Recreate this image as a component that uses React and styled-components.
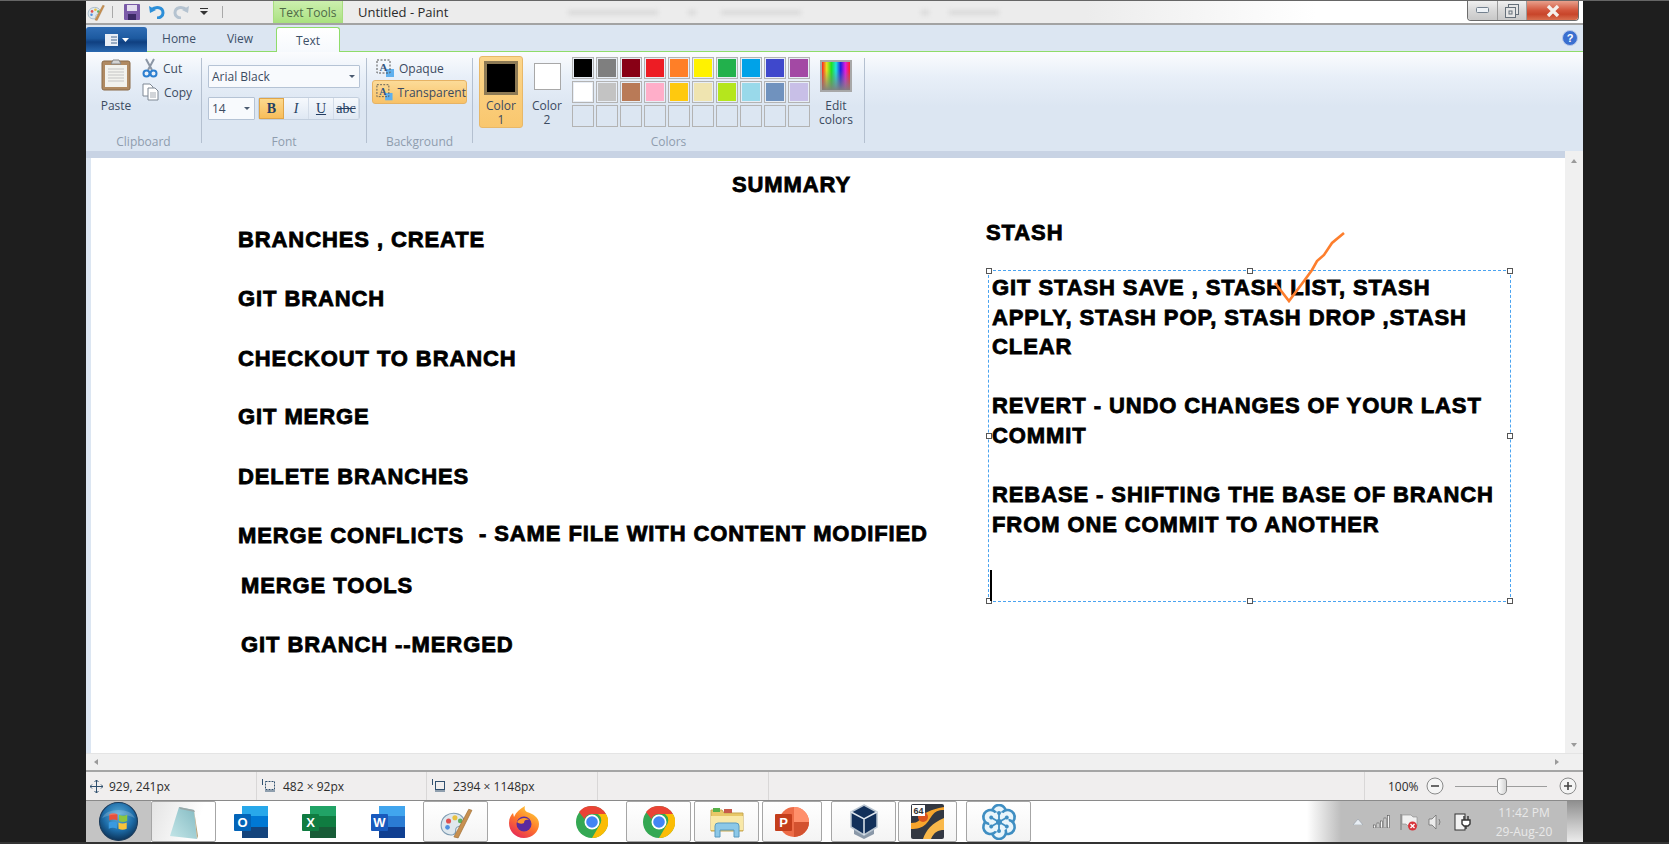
import styled, { createGlobalStyle } from 'styled-components';

const GlobalStyle = createGlobalStyle`
  html, body {
    margin: 0;
    padding: 0;
    background: #1e1e1e;
    overflow: hidden;
  }
  * { box-sizing: border-box; }
`;

const Page = styled.div`
  width: 1669px;
  height: 844px;
  background: #1e1e1e;
  border-top: 1px solid #666;
  border-bottom: 2px solid #333;
  padding-left: 86px;
  font-family: 'Open Sans', 'Noto Sans', sans-serif;
  font-size: 12px;
  color: #3b4a60;
  overflow: hidden;
`;
const Win = styled.div`
  width: 1497px;
  height: 841px;
  display: flex;
  flex-direction: column;
  background: #f0eeee;
`;

/* title bar */
const TitleBar = styled.div`
  height: 24px;
  flex: none;
  display: flex;
  align-items: center;
  background: linear-gradient(90deg, #ececec 1000px, #fff 1230px);
  border-bottom: 2px solid #a3a3a3;
  overflow: hidden;
`;
const Qat = styled.div`
  display: flex;
  align-items: center;
  width: 187px;
  height: 100%;
`;
const QatSlot = styled.div`
  width: ${(p) => p.$w}px;
  display: flex;
  justify-content: center;
  align-items: center;
`;
const QatSep = styled.div`
  width: 1px;
  height: 12px;
  background: #a9a9a9;
`;
const ContextTab = styled.div`
  width: 70px;
  height: 24px;
  flex: none;
  display: flex;
  align-items: center;
  justify-content: center;
  background: linear-gradient(#cdf0b0, #b4e58e 70%, #a6e07a);
  border-left: 1px solid #a8dd80;
  border-right: 1px solid #a8dd80;
  color: #4e6a46;
  font-size: 12px;
`;
const WinTitle = styled.div`
  margin-left: 15px;
  font-size: 13px;
  color: #2a2a2a;
`;
const GhostText = styled.div`
  width: ${(p) => p.$w}px;
  margin-left: ${(p) => p.$m}px;
  height: 5px;
  background: #dadada;
  filter: blur(2px);
`;
const Spacer = styled.div`
  flex: 1;
`;
const WinButtons = styled.div`
  display: flex;
  align-self: flex-start;
  height: 20px;
  margin-right: 4px;
  border: 1px solid #6c6c6c;
  border-top: none;
  border-radius: 0 0 4px 4px;
  overflow: hidden;
`;
const WinButton = styled.div`
  width: ${(p) => p.$w}px;
  display: flex;
  align-items: center;
  justify-content: center;
  background: ${(p) =>
    p.$close
      ? 'linear-gradient(#e8a08c, #d2543a 50%, #c8452a 70%, #d87050)'
      : 'linear-gradient(#f0f0f0, #d8d8d8 50%, #c8c8c8)'};
  border-right: ${(p) => (p.$close ? 'none' : '1px solid #9c9c9c')};
`;

/* tabs */
const TabRow = styled.div`
  height: 27px;
  flex: none;
  display: flex;
  align-items: flex-end;
  background: #dce6f2;
  border-bottom: 1px solid #8fdc6a;
`;
const AppMenu = styled.div`
  width: 61px;
  height: 25px;
  display: flex;
  align-items: center;
  justify-content: center;
  gap: 4px;
  margin-bottom: -1px;
  background: linear-gradient(#2f6db5, #1d5aa0 45%, #0f3f80 60%, #2a69b0);
  border-radius: 3px 3px 0 0;
`;
const Tab = styled.div`
  width: ${(p) => p.$w}px;
  height: 25px;
  display: flex;
  align-items: center;
  justify-content: center;
  font-size: 12px;
  color: #3d5068;
`;
const ActiveTab = styled(Tab)`
  height: 25px;
  margin-bottom: -1px;
  margin-left: 7px;
  background: linear-gradient(#fff, #f6f9fd);
  border: 1px solid #8fdc6a;
  border-bottom: none;
  border-radius: 3px 3px 0 0;
`;
const HelpBtn = styled.div`
  margin-left: auto;
  margin-right: 5px;
  align-self: center;
  display: flex;
`;

/* ribbon */
const Ribbon = styled.div`
  height: 99px;
  flex: none;
  display: flex;
  padding-top: 6px;
  background: linear-gradient(#fbfcfe, #e8eff8 25%, #dce6f2 55%);
`;
const Group = styled.div`
  width: ${(p) => p.$w}px;
  height: 92px;
  display: flex;
  flex-direction: column;
`;
const GroupBody = styled.div`
  height: 76px;
  display: flex;
  padding-left: ${(p) => p.$pl || 0}px;
`;
const GroupLabel = styled.div`
  height: 16px;
  line-height: 16px;
  text-align: center;
  font-size: 12px;
  color: #8f9dae;
`;
const RibbonSep = styled.div`
  width: 1px;
  height: 85px;
  background: #b4c0d0;
`;
const PasteBtn = styled.div`
  width: 46px;
  margin-left: 7px;
  display: flex;
  flex-direction: column;
  align-items: center;
  gap: 6px;
`;
const SmallCol = styled.div`
  display: flex;
  flex-direction: column;
  gap: 4px;
  margin-left: 3px;
`;
const SmallBtn = styled.div`
  height: 20px;
  display: flex;
  align-items: center;
  gap: 5px;
  font-size: 12px;
`;
const FontCol = styled.div`
  display: flex;
  flex-direction: column;
  gap: 9px;
  padding-top: 7px;
`;
const Combo = styled.div`
  width: ${(p) => p.$w}px;
  height: 23px;
  display: flex;
  align-items: center;
  justify-content: space-between;
  padding: 0 4px 0 3px;
  background: #f8fafd;
  border: 1px solid #b5c3d5;
  border-radius: 1px;
  font-size: 12px;
`;
const Caret = styled.span`
  width: 0;
  height: 0;
  border-left: 3px solid transparent;
  border-right: 3px solid transparent;
  border-top: 3px solid #4a5a70;
`;
const FontRow = styled.div`
  display: flex;
  gap: 3px;
`;
const StyleBtns = styled.div`
  display: flex;
  height: 23px;
  border: 1px solid #c3cfde;
  border-radius: 3px;
  background: linear-gradient(#f6f9fd, #dfe8f3);
`;
const StyleBtn = styled.div`
  width: 25px;
  display: flex;
  align-items: center;
  justify-content: center;
  font-family: 'Liberation Serif', serif;
  font-size: 14px;
  color: #243e62;
  background: ${(p) => (p.$on ? 'linear-gradient(#fcd98e, #f8bd5a)' : 'transparent')};
  border: ${(p) => (p.$on ? '1px solid #e0a548' : 'none')};
  border-right: 1px solid ${(p) => (p.$on ? '#e0a548' : '#d3dce8')};
`;
const BgCol = styled.div`
  display: flex;
  flex-direction: column;
  gap: 2px;
  padding: 0 0 0 5px;
`;
const BgBtn = styled.div`
  width: 95px;
  height: ${(p) => (p.$on ? 24 : 20)}px;
  display: flex;
  align-items: center;
  gap: 4px;
  padding-left: 3px;
  font-size: 12px;
  background: ${(p) => (p.$on ? 'linear-gradient(#fcdb98, #f8c268)' : 'transparent')};
  border: 1px solid ${(p) => (p.$on ? '#e6b365' : 'transparent')};
  border-radius: 3px;
`;
const ColorCols = styled.div`
  display: flex;
  padding-left: 6px;
`;
const ColorPick = styled.div`
  width: ${(p) => (p.$on ? 44 : 36)}px;
  height: 72px;
  margin: -2px 6px 0 0;
  display: flex;
  flex-direction: column;
  align-items: center;
  background: ${(p) => (p.$on ? 'linear-gradient(#fcd68c, #f9c76e)' : 'transparent')};
  border: ${(p) => (p.$on ? '1px solid #e8b868' : 'none')};
  border-radius: 3px;
`;
const BigSwatch = styled.div`
  width: ${(p) => p.$s}px;
  height: ${(p) => p.$s}px;
  margin-top: ${(p) => p.$mt}px;
  background: ${(p) => p.$c};
  border: ${(p) => (p.$on ? '3px' : '1px')} solid ${(p) => (p.$on ? '#8d7a55' : '#a8a8a8')};
  box-shadow: ${(p) => (p.$on ? 'none' : 'inset 0 0 0 1px #fff')};
`;
const SwatchLabel = styled.div`
  margin-top: ${(p) => p.$mt}px;
  font-size: 12px;
  line-height: 14px;
  text-align: center;
`;
const Palette = styled.div`
  display: grid;
  grid-template-columns: repeat(10, 22px);
  grid-auto-rows: 22px;
  gap: 2px;
  margin: -1px 0 0 1px;
`;
const Cell = styled.div`
  background: ${(p) => p.$c || 'transparent'};
  border: 1px solid #b3b3b3;
  box-shadow: ${(p) => (p.$c ? 'inset 0 0 0 1px #e8eef6' : 'none')};
`;
const EditColors = styled.div`
  width: 46px;
  margin-left: 3px;
  display: flex;
  flex-direction: column;
  align-items: center;
`;
const Rainbow = styled.div`
  width: 32px;
  height: 32px;
  margin-top: 2px;
  border: 2px solid #a8a8a8;
  background: linear-gradient(transparent 30%, rgba(128, 128, 128, 0.95)),
    linear-gradient(90deg, #ff2020, #e8e020, #20e020, #20e0e0, #2020e0, #e020e0, #ff2020);
`;

/* canvas */
const RibbonFoot = styled.div`
  height: 7px;
  flex: none;
  margin-right: 18px;
  background: #c8d3e4;
`;
const Workspace = styled.div`
  height: 595px;
  flex: none;
  display: flex;
`;
const LeftGutter = styled.div`
  width: 5px;
  background: #dce6f2;
`;
const Canvas = styled.div`
  position: relative;
  flex: 1;
  background: #fff;
  color: #000;
  overflow: hidden;
`;
const VScroll = styled.div`
  width: 18px;
  margin-top: -7px;
  display: flex;
  flex-direction: column;
  align-items: center;
  justify-content: space-between;
  padding: 8px 0 6px;
  background: #f0f0f0;
`;
const HScroll = styled.div`
  height: 17px;
  flex: none;
  display: flex;
  align-items: center;
  justify-content: space-between;
  padding: 0 24px 0 8px;
  background: #f0f0f0;
  border-top: 1px solid #e4e4e4;
`;
const Arrow = styled.span`
  width: 0;
  height: 0;
  border: 3px solid transparent;
  ${(p) => p.$dir === 'left' && 'border-right: 4px solid #9a9a9a; border-left: none;'}
  ${(p) => p.$dir === 'right' && 'border-left: 4px solid #9a9a9a; border-right: none;'}
  ${(p) => p.$dir === 'up' && 'border-bottom: 4px solid #9a9a9a; border-top: none;'}
  ${(p) => p.$dir === 'down' && 'border-top: 4px solid #9a9a9a; border-bottom: none;'}
`;
const PaintText = styled.div`
  position: absolute;
  left: ${(p) => p.$x - 91}px;
  top: ${(p) => p.$y - 158}px;
  height: 30px;
  line-height: 30px;
  white-space: nowrap;
  font-family: 'Liberation Sans', Arial, sans-serif;
  font-weight: 700;
  font-size: 22px;
  letter-spacing: 0.9px;
  -webkit-text-stroke: 0.8px #000;
`;
const TextBox = styled.div`
  position: absolute;
  left: ${988 - 91}px;
  top: ${270 - 158}px;
  width: 523px;
  height: 332px;
  padding: 2px 3px;
  border: 1px dashed #4aa3f0;
  font-family: 'Liberation Sans', Arial, sans-serif;
  font-weight: 700;
  font-size: 22px;
  letter-spacing: 0.9px;
  line-height: 29.6px;
  -webkit-text-stroke: 0.8px #000;
`;
const BoxLine = styled.div`
  height: 29.6px;
  white-space: nowrap;
`;
const Handle = styled.span`
  position: absolute;
  left: ${(p) => p.$l}%;
  top: ${(p) => p.$t}%;
  width: 6px;
  height: 6px;
  margin: -3px 0 0 -3px;
  background: #fff;
  border: 1px solid #555;
`;
const Cursor = styled.span`
  position: absolute;
  left: 1px;
  top: 299px;
  width: 2px;
  height: 31px;
  background: #000;
`;
const TickMark = styled.svg`
  position: absolute;
  left: ${1270 - 91}px;
  top: ${228 - 158}px;
`;

/* status bar */
const StatusBar = styled.div`
  height: 30px;
  flex: none;
  display: flex;
  background: #f0eeee;
  border-top: 2px solid #a5a5a5;
  font-size: 12px;
  color: #2c2c2c;
`;
const StatusCell = styled.div`
  width: ${(p) => p.$w}px;
  display: flex;
  align-items: center;
  gap: 6px;
  padding-left: 4px;
  border-right: 1px solid #d9d7d7;
`;
const ZoomCell = styled.div`
  flex: 1;
  display: flex;
  align-items: center;
  gap: 7px;
  padding-left: 23px;
`;
const ZoomTrack = styled.div`
  position: relative;
  width: 92px;
  height: 1px;
  margin: 0 5px 0 4px;
  background: #9d9d9d;
`;
const ZoomThumb = styled.div`
  position: absolute;
  left: 42px;
  top: -8px;
  width: 10px;
  height: 17px;
  border: 1px solid #8d8d8d;
  border-radius: 3px 3px 5px 5px;
  background: linear-gradient(90deg, #fff, #d4d4d4);
`;

/* taskbar */
const Taskbar = styled.div`
  height: 42px;
  flex: none;
  display: flex;
  align-items: stretch;
  background: linear-gradient(90deg, #fff 1221px, #bdbdbd 1255px);
  border-top: 1px solid #8a8a8a;
`;
const StartArea = styled.div`
  width: 65px;
  flex: none;
  display: flex;
  align-items: center;
  justify-content: center;
  background: #c4c4c4;
`;
const TaskBtn = styled.div`
  width: ${(p) => p.$w}px;
  flex: none;
  margin-left: ${(p) => p.$m || 0}px;
  display: flex;
  align-items: center;
  justify-content: center;
  border: 1px solid ${(p) => (p.$open ? '#a6a6a6' : 'transparent')};
  border-radius: 2px;
  background: ${(p) => (p.$open ? 'linear-gradient(#fff, #f4f4f4)' : 'transparent')};
`;
const NotepadBtn = styled(TaskBtn)`
  background: linear-gradient(110deg, #e4e4e4, #fff 70%);
`;
const Tray = styled.div`
  margin-left: auto;
  display: flex;
  align-items: center;
  gap: 10px;
  padding-right: 12px;
`;
const Clock = styled.div`
  width: 62px;
  margin-left: 12px;
  text-align: center;
  font-size: 12px;
  line-height: 19px;
  white-space: nowrap;
  color: #e9e9e9;
`;
const ShowDesktop = styled.div`
  width: 16px;
  flex: none;
  background: linear-gradient(#8f8f8f, #c8c8c8 60%, #ececec);
`;

const topColors = ['#000000', '#7f7f7f', '#880015', '#ed1c24', '#ff7f27', '#fff200', '#22b14c', '#00a2e8', '#3f48cc', '#a349a4'];
const midColors = ['#ffffff', '#c3c3c3', '#b97a57', '#ffaec9', '#ffc90e', '#efe4b0', '#b5e61d', '#99d9ea', '#7092be', '#c8bfe7'];
const blanks = Array(10).fill(null);

const leftNotes = [
  { x: 238, y: 225, t: 'BRANCHES , CREATE' },
  { x: 238, y: 284, t: 'GIT BRANCH' },
  { x: 238, y: 344, t: 'CHECKOUT TO BRANCH' },
  { x: 238, y: 402, t: 'GIT MERGE' },
  { x: 238, y: 462, t: 'DELETE BRANCHES' },
  { x: 238, y: 521, t: 'MERGE CONFLICTS' },
  { x: 479, y: 519, t: '- SAME FILE WITH CONTENT MODIFIED' },
  { x: 241, y: 571, t: 'MERGE TOOLS' },
  { x: 241, y: 630, t: 'GIT BRANCH --MERGED' },
  { x: 732, y: 170, t: 'SUMMARY' },
  { x: 986, y: 218, t: 'STASH' },
];
const boxLines = [
  'GIT STASH SAVE , STASH LIST, STASH',
  'APPLY, STASH POP, STASH DROP ,STASH',
  'CLEAR',
  '',
  'REVERT - UNDO CHANGES OF YOUR LAST',
  'COMMIT',
  '',
  'REBASE - SHIFTING THE BASE OF BRANCH',
  'FROM ONE COMMIT TO ANOTHER',
];
const handles = [
  [0, 0], [50, 0], [100, 0], [0, 50], [100, 50], [0, 100], [50, 100], [100, 100],
];
const snowAngles = [0, 60, 120, 180, 240, 300];

const PaletteIcon = ({ s = 20 }) => (
  <svg width={s} height={s} viewBox="0 0 32 32">
    <path d="M2 19C2 11 9 7 16 8c6 1 9 6 7 10-2 3-6 1-7 4s1 5-3 6C7 29 2 25 2 19z" fill="#dfe8ee" stroke="#7f9cb2" />
    <circle cx="9" cy="15" r="2.4" fill="#e05050" />
    <circle cx="15" cy="12" r="2.4" fill="#e8c040" />
    <circle cx="20" cy="15" r="2.2" fill="#60b060" />
    <circle cx="8" cy="21" r="2.2" fill="#5090e0" />
    <path d="M14 30L28 4l3 1-13 26z" fill="#c89050" stroke="#9a6a30" strokeWidth="0.6" />
  </svg>
);
const Scissors = () => (
  <svg width="16" height="20" viewBox="0 0 16 20" fill="none">
    <path d="M4 1l6 11M12 1L6 12" stroke="#8b96a5" strokeWidth="2" />
    <circle cx="4.5" cy="15.5" r="3" stroke="#2d7fd0" strokeWidth="2" />
    <circle cx="11.5" cy="15.5" r="3" stroke="#2d7fd0" strokeWidth="2" />
  </svg>
);
const CopyIcon = () => (
  <svg width="17" height="18" viewBox="0 0 17 18" fill="#fff" stroke="#7e8894">
    <path d="M1 1h7l3 3v9H1z" />
    <path d="M6 5h7l3 3v9H6z" />
    <path d="M8 10h6M8 12h6M8 14h6" strokeWidth="0.7" />
  </svg>
);
const Clipboard = () => (
  <svg width="30" height="33" viewBox="0 0 30 33">
    <rect x="1" y="3" width="28" height="29" rx="2" fill="#b08a62" stroke="#8a6a48" />
    <rect x="4" y="7" width="22" height="22" fill="#f2f2ee" />
    <path d="M7 11h16M7 14h16M7 17h16M7 20h16M7 23h16" stroke="#c4c4c4" />
    <path d="M10 6l2-4h6l2 4z" fill="#d4d4d4" stroke="#888" />
  </svg>
);
const TextModeIcon = () => (
  <svg width="19" height="19" viewBox="0 0 19 19">
    <rect x="10" y="10" width="8" height="8" fill="#5fb0ee" />
    <rect x="1" y="1" width="13" height="13" fill="none" stroke="#555" strokeDasharray="2 1.5" />
    <text x="3.5" y="12" fontFamily="Liberation Serif" fontSize="11" fontWeight="700" fill="#33557f">A</text>
  </svg>
);
const StartOrb = () => (
  <svg width="39" height="39" viewBox="0 0 38 38">
    <defs>
      <radialGradient id="orb" cx="50%" cy="35%" r="65%">
        <stop offset="0" stopColor="#5fb2dc" />
        <stop offset="0.6" stopColor="#1d6ca8" />
        <stop offset="1" stopColor="#0c3358" />
      </radialGradient>
    </defs>
    <circle cx="19" cy="19" r="18.5" fill="url(#orb)" stroke="#1a3a5a" />
    <path d="M10 12q4-2 8 0v6q-4-2-8 0z" fill="#e8503a" />
    <path d="M19.5 12.5q4 2 8 0v6q-4 2-8 0z" fill="#8cc63f" />
    <path d="M9.5 20q4-2 8 0v6q-4-2-8 0z" fill="#3a9ae0" />
    <path d="M19 20q4 2 8 0v6q-4 2-8 0z" fill="#f8c33a" />
    <path d="M3 16C6 5 32 5 35 16 28 11 10 11 3 16z" fill="#fff" opacity="0.18" />
  </svg>
);
const Notepad = () => (
  <svg width="36" height="36" viewBox="0 0 36 36">
    <defs>
      <linearGradient id="pad" x1="0" y1="1" x2="1" y2="0">
        <stop offset="0" stopColor="#c4e6e8" />
        <stop offset="1" stopColor="#83bac2" />
      </linearGradient>
    </defs>
    <path d="M13 3l15 3 3 29-27-3z" fill="url(#pad)" />
    <path d="M13 3l15 3 1 2-15-3z" fill="#9aa8a8" />
    <path d="M28 6l4 26-1 3z" fill="#b5a27a" />
  </svg>
);
const Office = ({ back, dark, mid, letter, tile, round }) => (
  <svg width="34" height="32" viewBox="0 0 34 32">
    {round ? (
      <>
        <circle cx="19" cy="16" r="15" fill={mid} />
        <path d="M19 1a15 15 0 0 1 15 15H19z" fill={back} />
        <path d="M34 16a15 15 0 0 1-15 15V16z" fill={dark} />
      </>
    ) : (
      <>
        <rect x="8" y="0" width="26" height="32" rx="2" fill={mid} />
        <rect x="8" y="0" width="26" height="10" fill={back} />
        <rect x="8" y="21" width="26" height="11" fill={dark} />
      </>
    )}
    <rect x="0" y="8" width="17" height="17" rx="1" fill={tile} />
    <text x="8.5" y="21" textAnchor="middle" fontFamily="Liberation Sans" fontWeight="700" fontSize="13" fill="#fff">{letter}</text>
  </svg>
);
const Firefox = () => (
  <svg width="32" height="34" viewBox="0 0 32 34">
    <defs>
      <linearGradient id="ff" x1="0.8" y1="0" x2="0.2" y2="1">
        <stop offset="0" stopColor="#ffd43a" />
        <stop offset="0.5" stopColor="#ff7a2a" />
        <stop offset="1" stopColor="#e5245a" />
      </linearGradient>
    </defs>
    <path d="M16 33C7 33 1 26 1 18 1 13 3 10 5 8l1 4c2-5 6-8 11-11-1 3 0 5 2 6 6 2 12 5 12 12 0 8-7 14-15 14z" fill="url(#ff)" />
    <circle cx="16" cy="19" r="7.5" fill="#5b2a9e" />
    <path d="M9 17c3-5 10-5 12-2-3-1-5 0-5 3-2 1-5 1-7-1z" fill="#ff9a2a" />
  </svg>
);
const Chrome = () => (
  <svg width="32" height="32" viewBox="0 0 32 32">
    <circle cx="16" cy="16" r="16" fill="#34a853" />
    <path d="M16 0a16 16 0 0 1 13.9 8H16a8 8 0 0 0-7.5 5L3 6A16 16 0 0 1 16 0z" fill="#ea4335" />
    <path d="M30 8a16 16 0 0 1-14 24l7-12a8 8 0 0 0-1-12z" fill="#fbbc05" />
    <circle cx="16" cy="16" r="7.5" fill="#fff" />
    <circle cx="16" cy="16" r="5.8" fill="#4285f4" />
  </svg>
);
const Explorer = () => (
  <svg width="34" height="34" viewBox="0 0 34 34">
    <path d="M1 5h11l2 3h19v18H1z" fill="#e8c868" stroke="#c8a850" />
    <rect x="3" y="3" width="7" height="4" fill="#56b04a" />
    <rect x="14" y="4" width="8" height="4" fill="#c85a4a" />
    <path d="M1 11h32v14H1z" fill="#f8e8a8" />
    <path d="M5 32V21q0-3 3-3h18q3 0 3 3v11h-5v-7H10v7z" fill="#8cc8e8" stroke="#5a9ac0" />
  </svg>
);
const VBox = () => (
  <svg width="30" height="36" viewBox="0 0 30 36">
    <path d="M5 24l10 6 10-6v6l-10 5-10-5z" fill="#8a98a8" />
    <path d="M15 1l13 7v15l-13 8L2 23V8z" fill="#12305a" stroke="#b8c4d0" strokeWidth="1.5" />
    <path d="M2 8l13 7 13-7M15 15v16" stroke="#dfe6ee" strokeWidth="1.5" fill="none" />
  </svg>
);
const Orange = () => (
  <svg width="33" height="35" viewBox="0 0 33 35">
    <rect width="33" height="35" rx="2" fill="#333842" />
    <path d="M33 6c-12 0-12 8-18 14-4 4-9 5-15 5v-6c8 0 8-3 12-8 2-2 6-5 21-8z" fill="#f7a52c" />
    <path d="M33 14v12c-6 0-10 2-13 9h-8c3-9 9-16 21-21z" fill="#f9b84a" />
    <circle cx="12" cy="13" r="5" fill="#d9531e" />
    <rect x="1" y="1" width="13" height="11" fill="#fff" />
    <text x="7.5" y="10" textAnchor="middle" fontFamily="Liberation Sans" fontWeight="700" fontSize="9" fill="#333">64</text>
  </svg>
);
const Snow = () => (
  <svg width="36" height="36" viewBox="0 0 36 36" fill="none">
    {snowAngles.map((a) => (
      <circle key={a} cx="18" cy="8" r="7" fill="#e9f5fb" stroke="#3f8ec2" strokeWidth="2.6" transform={`rotate(${a} 18 18)`} />
    ))}
    <circle cx="18" cy="18" r="10" fill="#e9f5fb" />
    {snowAngles.map((a) => (
      <g key={a} transform={`rotate(${a} 18 18)`}>
        <path d="M18 18V9" stroke="#3f8ec2" strokeWidth="1.8" />
        <circle cx="18" cy="9" r="2" fill="#3f8ec2" />
      </g>
    ))}
    <circle cx="18" cy="18" r="3" fill="#3f8ec2" />
  </svg>
);
const CircleBtn = ({ plus }) => (
  <svg width="18" height="18" viewBox="0 0 18 18" fill="none">
    <circle cx="9" cy="9" r="8" fill="#f4f4f4" stroke="#8a8a8a" />
    <path d={plus ? 'M5 9h8M9 5v8' : 'M5 9h8'} stroke="#444" strokeWidth="1.6" />
  </svg>
);

export default function App() {
  return (
    <Page>
      <GlobalStyle />
      <Win>
        <TitleBar>
          <Qat>
            <QatSlot $w={20}><PaletteIcon s={18} /></QatSlot>
            <QatSlot $w={12}><QatSep /></QatSlot>
            <QatSlot $w={28}>
              <svg width="16" height="16" viewBox="0 0 16 16">
                <rect width="16" height="16" rx="1" fill="#7a5aa8" />
                <rect x="3" y="1" width="10" height="6" fill="#e4deef" />
                <rect x="4" y="10" width="8" height="6" fill="#3c2a66" />
              </svg>
            </QatSlot>
            <QatSlot $w={22}>
              <svg width="16" height="14" viewBox="0 0 16 14" fill="none">
                <path d="M2 5c5-4 12-3 12 3 0 3-3 5-6 5" stroke="#2d8fd8" strokeWidth="3" />
                <path d="M0 1l1 7 6-3z" fill="#2d8fd8" />
              </svg>
            </QatSlot>
            <QatSlot $w={26}>
              <svg width="16" height="14" viewBox="0 0 16 14" fill="none">
                <path d="M14 5C9 1 2 2 2 8c0 3 3 5 6 5" stroke="#b5c3d0" strokeWidth="3" />
                <path d="M16 1l-1 7-6-3z" fill="#b5c3d0" />
              </svg>
            </QatSlot>
            <QatSlot $w={20}>
              <svg width="8" height="8" viewBox="0 0 8 8"><path d="M0 0h8v1H0zM0 3h8L4 7z" fill="#333" /></svg>
            </QatSlot>
            <QatSlot $w={16}><QatSep /></QatSlot>
          </Qat>
          <ContextTab>Text Tools</ContextTab>
          <WinTitle>Untitled - Paint</WinTitle>
          <GhostText $w={90} $m={120} />
          <GhostText $w={8} $m={30} />
          <GhostText $w={80} $m={25} />
          <GhostText $w={8} $m={120} />
          <GhostText $w={50} $m={20} />
          <Spacer />
          <WinButtons>
            <WinButton $w={30}>
              <svg width="13" height="7" viewBox="0 0 13 7"><rect x="0.5" y="0.5" width="12" height="5" rx="1" fill="#eef2f6" stroke="#73808e" /></svg>
            </WinButton>
            <WinButton $w={29}>
              <svg width="14" height="14" viewBox="0 0 14 14" fill="#e6e6e6" stroke="#66707a">
                <rect x="3.5" y="0.5" width="10" height="10" />
                <rect x="0.5" y="3.5" width="10" height="10" />
                <rect x="4" y="7" width="3" height="3" />
              </svg>
            </WinButton>
            <WinButton $w={51} $close>
              <svg width="14" height="12" viewBox="0 0 14 12"><path d="M2 1l10 10M12 1L2 11" stroke="#f4f0ec" strokeWidth="3.4" /></svg>
            </WinButton>
          </WinButtons>
        </TitleBar>

        <TabRow>
          <AppMenu>
            <svg width="13" height="12" viewBox="0 0 13 12"><rect width="13" height="12" fill="#e8eef6" /><path d="M6 3h6M6 6h6M6 9h6" stroke="#4a6a90" /></svg>
            <svg width="7" height="4" viewBox="0 0 7 4"><path d="M0 0h7L3.5 4z" fill="#fff" /></svg>
          </AppMenu>
          <Tab $w={64}>Home</Tab>
          <Tab $w={58}>View</Tab>
          <ActiveTab $w={64}>Text</ActiveTab>
          <HelpBtn>
            <svg width="16" height="16" viewBox="0 0 16 16">
              <circle cx="8" cy="8" r="7.5" fill="#3a6fd0" stroke="#b8c8e8" />
              <text x="8" y="12" textAnchor="middle" fontFamily="Liberation Sans" fontWeight="700" fontSize="11" fill="#fff">?</text>
            </svg>
          </HelpBtn>
        </TabRow>

        <Ribbon>
          <Group $w={115}>
            <GroupBody>
              <PasteBtn>
                <Clipboard />
                Paste
              </PasteBtn>
              <SmallCol>
                <SmallBtn><Scissors />Cut</SmallBtn>
                <SmallBtn><CopyIcon />Copy</SmallBtn>
              </SmallCol>
            </GroupBody>
            <GroupLabel>Clipboard</GroupLabel>
          </Group>
          <RibbonSep />
          <Group $w={164}>
            <GroupBody $pl={6}>
              <FontCol>
                <Combo $w={152}>Arial Black<Caret /></Combo>
                <FontRow>
                  <Combo $w={47}>14<Caret /></Combo>
                  <StyleBtns>
                    <StyleBtn $on><b>B</b></StyleBtn>
                    <StyleBtn><i>I</i></StyleBtn>
                    <StyleBtn><u>U</u></StyleBtn>
                    <StyleBtn><s>abc</s></StyleBtn>
                  </StyleBtns>
                </FontRow>
              </FontCol>
            </GroupBody>
            <GroupLabel>Font</GroupLabel>
          </Group>
          <RibbonSep />
          <Group $w={105}>
            <GroupBody>
              <BgCol>
                <BgBtn><TextModeIcon />Opaque</BgBtn>
                <BgBtn $on><TextModeIcon />Transparent</BgBtn>
              </BgCol>
            </GroupBody>
            <GroupLabel>Background</GroupLabel>
          </Group>
          <RibbonSep />
          <Group $w={391}>
            <GroupBody>
              <ColorCols>
                <ColorPick $on>
                  <BigSwatch $s={34} $mt={4} $c="#000" $on />
                  <SwatchLabel $mt={4}>Color<br />1</SwatchLabel>
                </ColorPick>
                <ColorPick>
                  <BigSwatch $s={27} $mt={7} $c="#fff" />
                  <SwatchLabel $mt={9}>Color<br />2</SwatchLabel>
                </ColorPick>
                <Palette>
                  {topColors.map((c) => <Cell key={c} $c={c} />)}
                  {midColors.map((c) => <Cell key={c} $c={c} />)}
                  {blanks.map((_, i) => <Cell key={i} />)}
                </Palette>
                <EditColors>
                  <Rainbow />
                  <SwatchLabel $mt={7}>Edit<br />colors</SwatchLabel>
                </EditColors>
              </ColorCols>
            </GroupBody>
            <GroupLabel>Colors</GroupLabel>
          </Group>
          <RibbonSep />
        </Ribbon>

        <RibbonFoot />
        <Workspace>
          <LeftGutter />
          <Canvas>
            {leftNotes.map((n) => (
              <PaintText key={n.t} $x={n.x} $y={n.y}>{n.t}</PaintText>
            ))}
            <TextBox>
              {boxLines.map((l, i) => <BoxLine key={i}>{l}</BoxLine>)}
              {handles.map(([l, t]) => <Handle key={`${l}-${t}`} $l={l} $t={t} />)}
              <Cursor />
            </TextBox>
            <TickMark width="80" height="80" viewBox="0 0 80 80" fill="none">
              <path d="M5 55l14 18 15-20 8-11 5-9 7-6 8-12 12-10" stroke="#fd7e2d" strokeWidth="2.6" />
            </TickMark>
          </Canvas>
          <VScroll>
            <Arrow $dir="up" />
            <Arrow $dir="down" />
          </VScroll>
        </Workspace>
        <HScroll>
          <Arrow $dir="left" />
          <Arrow $dir="right" />
        </HScroll>

        <StatusBar>
          <StatusCell $w={171}>
            <svg width="13" height="13" viewBox="0 0 13 13"><path d="M6.5 0v13M0 6.5h13M4.5 2l2-2 2 2M4.5 11l2 2 2-2M2 4.5l-2 2 2 2M11 4.5l2 2-2 2" stroke="#30506f" fill="none" /></svg>
            929, 241px
          </StatusCell>
          <StatusCell $w={170}>
            <svg width="16" height="14" viewBox="0 0 16 14" fill="none" stroke="#30506f"><rect x="4.5" y="2.5" width="9" height="8" strokeDasharray="2 1" /><path d="M1.5 0v6M4 12h10" /></svg>
            482 × 92px
          </StatusCell>
          <StatusCell $w={171}>
            <svg width="16" height="14" viewBox="0 0 16 14" fill="none" stroke="#30506f"><rect x="4.5" y="2.5" width="9" height="8" /><path d="M1.5 0v6M4 12h10" /></svg>
            2394 × 1148px
          </StatusCell>
          <StatusCell $w={171} />
          <StatusCell $w={596} />
          <ZoomCell>
            100%
            <CircleBtn />
            <ZoomTrack><ZoomThumb /></ZoomTrack>
            <CircleBtn plus />
          </ZoomCell>
        </StatusBar>

        <Taskbar>
          <StartArea><StartOrb /></StartArea>
          <NotepadBtn $w={65} $open><Notepad /></NotepadBtn>
          <TaskBtn $w={70}>
            <Office back="#28a8ea" mid="#0078d4" dark="#14447d" tile="#0364b8" letter="O" />
          </TaskBtn>
          <TaskBtn $w={66}>
            <Office back="#21a366" mid="#107c41" dark="#185c37" tile="#107c41" letter="X" />
          </TaskBtn>
          <TaskBtn $w={71}>
            <Office back="#41a5ee" mid="#2b7cd3" dark="#103f91" tile="#185abd" letter="W" />
          </TaskBtn>
          <TaskBtn $w={65} $open><PaletteIcon s={34} /></TaskBtn>
          <TaskBtn $w={71}><Firefox /></TaskBtn>
          <TaskBtn $w={65}><Chrome /></TaskBtn>
          <TaskBtn $w={65} $m={2} $open><Chrome /></TaskBtn>
          <TaskBtn $w={65} $m={3} $open><Explorer /></TaskBtn>
          <TaskBtn $w={60} $m={3} $open>
            <Office round back="#ff8f6b" mid="#ed6c47" dark="#d35230" tile="#c43e1c" letter="P" />
          </TaskBtn>
          <TaskBtn $w={65} $m={9} $open><VBox /></TaskBtn>
          <TaskBtn $w={59} $m={2} $open><Orange /></TaskBtn>
          <TaskBtn $w={65} $m={9} $open><Snow /></TaskBtn>
          <Tray>
            <svg width="10" height="6" viewBox="0 0 10 6"><path d="M5 0l5 6H0z" fill="#e8eef4" stroke="#8a949e" strokeWidth="0.5" /></svg>
            <svg width="17" height="13" viewBox="0 0 17 13" fill="#f5f5f5" stroke="#555" strokeWidth="0.6"><rect x="0.5" y="10" width="2" height="3" /><rect x="4" y="8" width="2" height="5" /><rect x="7.5" y="6" width="2" height="7" /><rect x="11" y="3" width="2" height="10" /><rect x="14.5" y="0.5" width="2" height="12.5" /></svg>
            <svg width="18" height="18" viewBox="0 0 18 18">
              <path d="M1 1v16" stroke="#777" />
              <path d="M2 2h9l2 2h4v9H8l-2-2H2z" fill="#f0f0f0" stroke="#888" strokeWidth="0.6" />
              <circle cx="12.5" cy="13" r="4.5" fill="#d8333a" />
              <path d="M10.5 11l4 4M14.5 11l-4 4" stroke="#fff" strokeWidth="1.4" />
            </svg>
            <svg width="16" height="16" viewBox="0 0 16 16" fill="#ececec" stroke="#666" strokeWidth="0.7"><path d="M1 5h3l4-4v14l-4-4H1z" /><path d="M11 5q2 3 0 6" fill="none" /></svg>
            <svg width="17" height="18" viewBox="0 0 17 18" fill="none" stroke="#333"><rect x="1" y="1" width="10" height="16" fill="#f2f2f2" /><path d="M8 7h8v4l-2 2h-4l-2-2zM10 3v4M14 3v4M12 13v3" fill="#fff" strokeWidth="1.4" /></svg>
            <Clock>11:42 PM<br />29-Aug-20</Clock>
          </Tray>
          <ShowDesktop />
        </Taskbar>
      </Win>
    </Page>
  );
}
